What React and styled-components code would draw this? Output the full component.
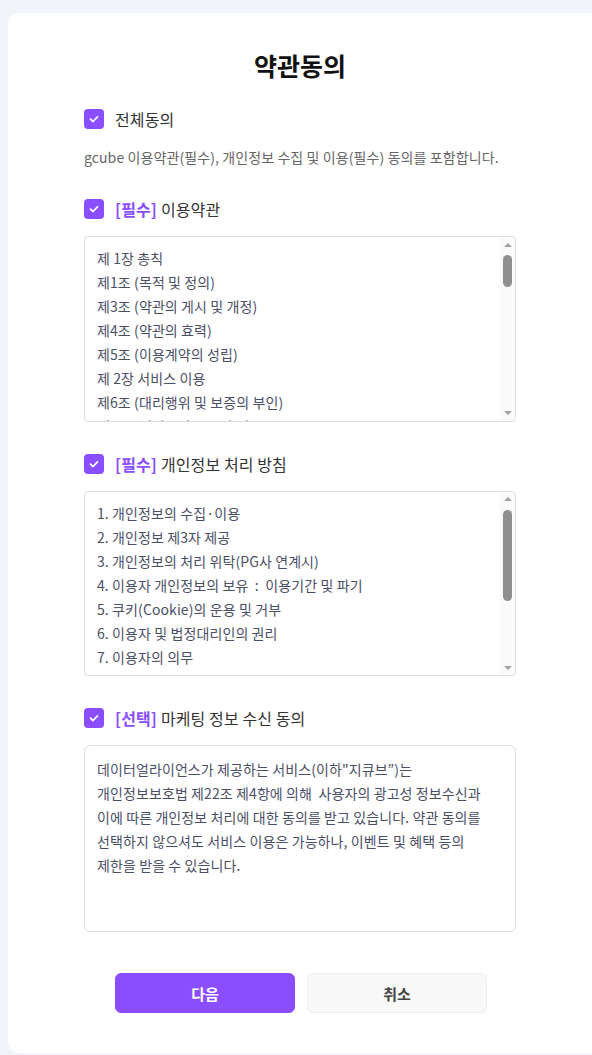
import React, { useState, useRef, useLayoutEffect } from "react"
import styled, { createGlobalStyle } from "styled-components"

const GlobalStyle = createGlobalStyle`
    html, body {
        margin: 0;
        padding: 0;
        background: #f1f4f8;
        font-family: "Noto Sans CJK KR", "Noto Sans", sans-serif;
    }
`

const terms = [
    "제 1장 총칙",
    "제1조 (목적 및 정의)",
    "제3조 (약관의 게시 및 개정)",
    "제4조 (약관의 효력)",
    "제5조 (이용계약의 성립)",
    "제 2장 서비스 이용",
    "제6조 (대리행위 및 보증의 부인)",
    "제7조 (서비스의 종류와 이용료)",
    "제8조 (서비스 이용시간)",
    "제9조 (서비스의 변경 및 중지)",
    "제10조 (정보의 제공 및 광고의 게재)",
    "제11조 (게시물의 관리)",
    "제12조 (게시물의 저작권)",
    "제 3장 계약 당사자의 의무",
    "제13조 (회사의 의무)",
    "제14조 (회원의 의무)",
    "제15조 (회원의 아이디 및 비밀번호 관리)",
    "제16조 (개인정보의 보호)",
    "제 4장 이용계약의 해지",
    "제17조 (이용계약의 해지)",
    "제18조 (이용제한)",
    "제19조 (이용제한의 해제)",
    "제 5장 결제 및 환불",
    "제20조 (결제방법)",
    "제21조 (청약철회)",
    "제22조 (환불)",
    "제23조 (과오금)",
    "제 6장 손해배상 및 기타사항",
    "제24조 (손해배상)",
    "제25조 (면책조항)",
    "제26조 (분쟁의 해결)",
    "제27조 (재판권 및 준거법)",
    "부칙",
    "제1조 (시행일)",
    "",
]

const privacy = [
    "1. 개인정보의 수집·이용",
    "2. 개인정보 제3자 제공",
    "3. 개인정보의 처리 위탁(PG사 연계시)",
    "4. 이용자 개인정보의 보유  :  이용기간 및 파기",
    "5. 쿠키(Cookie)의 운용 및 거부",
    "6. 이용자 및 법정대리인의 권리",
    "7. 이용자의 의무",
    "8. 링크 사이트에 대한 책임",
    "9. 개인정보의 기술적/관리적 보호 대책",
    "10. 개인정보 보호책임자",
    "11. 고지의 의무",
    "",
]

const marketing = `데이터얼라이언스가 제공하는 서비스(이하"지큐브”)는
개인정보보호법 제22조 제4항에 의해  사용자의 광고성 정보수신과
이에 따른 개인정보 처리에 대한 동의를 받고 있습니다. 약관 동의를
선택하지 않으셔도 서비스 이용은 가능하나, 이벤트 및 혜택 등의
제한을 받을 수 있습니다.`

const CheckIcon = () => (
    <svg width="12" height="12" viewBox="0 0 12 12" fill="none">
        <path d="M2.5 6.2L5 8.5L9.5 3.8" stroke="#fff" strokeWidth="1.8" strokeLinecap="round" strokeLinejoin="round" />
    </svg>
)

const CheckRow = ({ checked, onToggle, tag, children, gap }) => (
    <Row $gap={gap} onClick={onToggle}>
        <Box $checked={checked}>{checked && <CheckIcon />}</Box>
        <Label>
            {tag && <Tag>[{tag}]</Tag>}
            {children}
        </Label>
    </Row>
)

// scrolling list with a drawn scrollbar (the thumb follows the content)
const ScrollList = ({ lines }) => {
    const contentRef = useRef(null)
    const trackRef = useRef(null)
    const [thumb, setThumb] = useState({ top: 0, height: 0 })

    const measure = () => {
        const el = contentRef.current
        const track = trackRef.current
        if (!el || !track) return
        const trackH = track.clientHeight
        const height = Math.max(20, (trackH * el.clientHeight) / el.scrollHeight)
        const maxScroll = el.scrollHeight - el.clientHeight
        const top = maxScroll > 0 ? ((trackH - height) * el.scrollTop) / maxScroll : 0
        setThumb({ top, height })
    }

    useLayoutEffect(measure, [])

    return (
        <Frame>
            <Content ref={contentRef} onScroll={measure}>
                {lines.map((line, i) => <Line key={i}>{line || "\u00a0"}</Line>)}
            </Content>
            <Bar>
                <Arrow $dir="up" />
                <Track ref={trackRef}>
                    <Thumb style={{ top: thumb.top, height: thumb.height }} />
                </Track>
                <Arrow $dir="down" />
            </Bar>
        </Frame>
    )
}

const App = () => {
    const [checks, setChecks] = useState({ terms: true, privacy: true, marketing: true })
    const all = checks.terms && checks.privacy && checks.marketing

    const toggle = (key) => setChecks((prev) => ({ ...prev, [key]: !prev[key] }))
    const toggleAll = () => setChecks({ terms: !all, privacy: !all, marketing: !all })

    return (
        <>
            <GlobalStyle />
            <Page>
                <Card>
                    <Title>약관동의</Title>
                    <CheckRow checked={all} onToggle={toggleAll}>전체동의</CheckRow>
                    <Description>gcube 이용약관(필수), 개인정보 수집 및 이용(필수) 동의를 포함합니다.</Description>

                    <CheckRow checked={checks.terms} onToggle={() => toggle("terms")} tag="필수" gap={32}>
                        이용약관
                    </CheckRow>
                    <ScrollList lines={terms} />

                    <CheckRow checked={checks.privacy} onToggle={() => toggle("privacy")} tag="필수" gap={32}>
                        개인정보 처리 방침
                    </CheckRow>
                    <ScrollList lines={privacy} />

                    <CheckRow checked={checks.marketing} onToggle={() => toggle("marketing")} tag="선택" gap={32}>
                        마케팅 정보 수신 동의
                    </CheckRow>
                    <TextBox>{marketing}</TextBox>

                    <Buttons>
                        <Button $primary>다음</Button>
                        <Button>취소</Button>
                    </Buttons>
                </Card>
            </Page>
        </>
    )
}

const Page = styled.div`
    padding: 13px 0 0 8px;
    min-height: 1055px;
    box-sizing: border-box;
`

const Card = styled.div`
    background: #ffffff;
    border-radius: 12px 0 0 12px;
    height: 1040px;
    box-sizing: border-box;
    padding: 35px 76px 40px;
    display: flex;
    flex-direction: column;
    letter-spacing: 0.1px;
`

const Title = styled.h1`
    margin: 0 0 27px;
    font-size: 25px;
    line-height: 34px;
    font-weight: 700;
    color: #111;
    text-align: center;
    letter-spacing: 0;
`

const Row = styled.div`
    display: flex;
    align-items: center;
    gap: 11px;
    height: 20px;
    margin-top: ${({ $gap }) => ($gap ? `${$gap}px` : 0)};
    margin-bottom: 17px;
    cursor: pointer;
`

const Box = styled.span`
    width: 20px;
    height: 20px;
    border-radius: 4px;
    background: ${({ $checked }) => ($checked ? "#8a4dff" : "#fff")};
    border: ${({ $checked }) => ($checked ? "none" : "1px solid #ccc")};
    display: flex;
    align-items: center;
    justify-content: center;
    flex-shrink: 0;
`

const Label = styled.span`
    font-size: 16px;
    line-height: 20px;
    color: #333;
`

const Tag = styled.b`
    color: #8a4dff;
    font-weight: 700;
    margin-right: 4px;
`

const Description = styled.p`
    margin: 1px 0 0;
    font-size: 14px;
    line-height: 20px;
    color: #666;
`

const Frame = styled.div`
    display: flex;
    height: 187px;
    box-sizing: border-box;
    border: 1px solid #dcdde8;
    border-radius: 4px;
    overflow: hidden;
`

const Content = styled.div`
    flex: 1;
    padding: 9px 12px 0;
    overflow-y: auto;
    scrollbar-width: none;

    &::-webkit-scrollbar {
        display: none;
    }
`

const Bar = styled.div`
    width: 15px;
    flex-shrink: 0;
    display: flex;
    flex-direction: column;
    background: #fafafa;
`

const Arrow = styled.div`
    height: 15px;
    display: flex;
    align-items: center;
    justify-content: center;

    &::before {
        content: "";
        width: 0;
        height: 0;
        border-left: 4px solid transparent;
        border-right: 4px solid transparent;
        ${({ $dir }) => ($dir === "up" ? "border-bottom: 4px solid #a3a3a3;" : "border-top: 4px solid #a3a3a3;")}
    }
`

const Track = styled.div`
    flex: 1;
    position: relative;
    margin: 3px 0;
`

const Thumb = styled.div`
    position: absolute;
    left: 3px;
    right: 3px;
    border-radius: 5px;
    background: #8f8f8f;
`

const Line = styled.div`
    font-size: 14px;
    line-height: 24px;
    color: #4b4f66;
    white-space: pre;
`

const TextBox = styled.div`
    height: 188px;
    box-sizing: border-box;
    border: 1px solid #dcdde8;
    border-radius: 6px;
    padding: 11px 12px 0;
    font-size: 14px;
    line-height: 24px;
    color: #4b4f66;
    white-space: pre-wrap;
`

const Buttons = styled.div`
    display: flex;
    justify-content: center;
    gap: 12px;
    margin-top: 41px;
    padding-left: 2px;
`

const Button = styled.button`
    width: 180px;
    height: 40px;
    border-radius: 6px;
    font-family: inherit;
    font-size: 15px;
    font-weight: 700;
    cursor: pointer;
    background: ${({ $primary }) => ($primary ? "#8a4dff" : "#f8f8f9")};
    color: ${({ $primary }) => ($primary ? "#fff" : "#444")};
    border: 1px solid ${({ $primary }) => ($primary ? "#8a4dff" : "#eeeef0")};
`

export default App
